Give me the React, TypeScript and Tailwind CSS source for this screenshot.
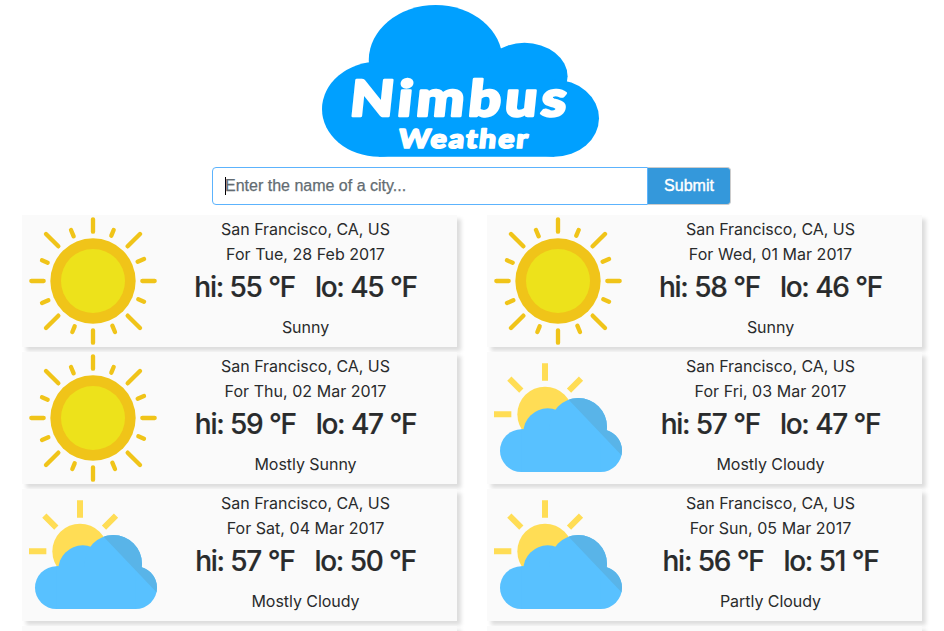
import React from "react";

type Condition = "Sunny" | "Mostly Sunny" | "Mostly Cloudy" | "Partly Cloudy";

interface Forecast {
  date: string;
  hi: number;
  lo: number;
  condition: Condition;
}

const forecasts: Forecast[] = [
  { date: "Tue, 28 Feb 2017", hi: 55, lo: 45, condition: "Sunny" },
  { date: "Wed, 01 Mar 2017", hi: 58, lo: 46, condition: "Sunny" },
  { date: "Thu, 02 Mar 2017", hi: 59, lo: 47, condition: "Mostly Sunny" },
  { date: "Fri, 03 Mar 2017", hi: 57, lo: 47, condition: "Mostly Cloudy" },
  { date: "Sat, 04 Mar 2017", hi: 57, lo: 50, condition: "Mostly Cloudy" },
  { date: "Sun, 05 Mar 2017", hi: 56, lo: 51, condition: "Partly Cloudy" },
];

function Logo() {
  return (
    <svg viewBox="30 15 829 454" preserveAspectRatio="none" className="mt-[5px] h-[152px] w-[277px] shrink-0 overflow-visible" aria-label="Nimbus Weather">
      <g fill="#00a0ff">
        <ellipse cx="370" cy="180" rx="200" ry="165" />
        <ellipse cx="636" cy="228" rx="129" ry="100" />
        <ellipse cx="200" cy="326" rx="170" ry="142" />
        <ellipse cx="725" cy="353" rx="134" ry="115" />
        <path d="M200 180H636V240H725V468H200Z" />
      </g>
      <g fill="#fff" stroke="#fff" strokeLinejoin="round" fontFamily="Lato, sans-serif" fontWeight="900">
        <text transform="translate(110 346) skewX(-6)" fontSize="148" strokeWidth="8" letterSpacing="11" textLength="660" lengthAdjust="spacingAndGlyphs">Nimbus</text>
        <text transform="translate(257 443) skewX(-6)" fontSize="78" strokeWidth="5" letterSpacing="5" textLength="392" lengthAdjust="spacingAndGlyphs">Weather</text>
      </g>
    </svg>
  );
}

const quarterTurns = [0, 90, 180, 270];

function SunIcon() {
  return (
    <svg viewBox="-192 -192 384 384" className="size-32">
      <circle r="128" fill="#f0c419" />
      <circle r="96" fill="#ede21b" />
      <g stroke="#f0c419" strokeWidth="13" strokeLinecap="round">
        {quarterTurns.map((angle) => (
          <g key={angle} transform={`rotate(${angle})`}>
            <path d="M0-185V-148M-141-141L-104-104M-66-153L-58-134M62-153L55-136" />
          </g>
        ))}
      </g>
    </svg>
  );
}

function CloudIcon({ id }: { id: string }) {
  const shape = (
    <>
      <circle cx="109" cy="317" r="64" />
      <circle cx="347" cy="317" r="64" />
      <circle cx="188" cy="263" r="73" />
      <circle cx="280" cy="245" r="86" />
      <path d="M109 253H347V381H109Z" />
    </>
  );
  return (
    <svg viewBox="27 27 384 384" className="size-32">
      <circle cx="180" cy="208" r="83" fill="#ffdd55" />
      <path d="M180 55V107M27 208H79M73 101L109 137M288 101L252 137" stroke="#ffdd55" strokeWidth="18" />
      <clipPath id={id}>{shape}</clipPath>
      <g fill="#58c1ff">{shape}</g>
      <path d="M246 159L411 332V150Z" fill="#59b4e8" clipPath={`url(#${id})`} />
    </svg>
  );
}

function ForecastCard({ day, id }: { day: Forecast; id: string }) {
  const sunny = day.condition === "Sunny" || day.condition === "Mostly Sunny";
  return (
    <article className="flex h-[132px] bg-[#fafafa] shadow-[4px_4px_4px_#dddddd]">
      <div className="w-[132px] shrink-0 pt-0.5 pl-[7px]">{sunny ? <SunIcon /> : <CloudIcon id={id} />}</div>
      <div className="flex flex-1 flex-col items-center pt-0.5 text-base leading-[25px] tracking-[-0.04px] whitespace-nowrap">
        <p>San Francisco, CA, US</p>
        <p className="tracking-[0.04px]">For {day.date}</p>
        <p className="flex h-[41px] items-center gap-[20px] text-[28px] font-[550] tracking-[-1.3px] [word-spacing:0.5px] [-webkit-text-stroke:0.2px_#292b2c]">
          <span>hi: {day.hi} °F</span>
          <span>lo: {day.lo} °F</span>
        </p>
        <p className="mt-[7px]">{day.condition}</p>
      </div>
    </article>
  );
}

export default function App() {
  return (
    <main className="flex h-[631px] flex-col overflow-hidden bg-white font-['Inter',sans-serif] text-[#292b2c]">
      <header className="flex flex-col items-center pr-[23px]">
        <Logo />
      </header>
      <form className="mt-[10px] ml-[212px] flex h-[38px] w-[519px] shrink-0 font-['Liberation_Sans',sans-serif] text-base">
        <div className="flex w-[436px] items-center rounded-l border border-[#5cb3fd] pl-3">
          <span className="h-[18px] w-px bg-black" />
          <span className="-ml-px text-[#636c72] [-webkit-text-stroke:0.25px_#636c72]">Enter the name of a city...</span>
        </div>
        <button type="button" className="flex-1 rounded-r border border-l-0 border-[#ccc] bg-[#3498db] text-white [-webkit-text-stroke:0.4px_white]">
          Submit
        </button>
      </form>
      <section className="mt-[10px] ml-[22px] grid w-[900px] shrink-0 grid-cols-[435px_435px] gap-x-[30px] gap-y-[5px]">
        {forecasts.map((day, i) => (
          <ForecastCard key={day.date} day={day} id={`cloud-${i}`} />
        ))}
        <div className="h-[132px] bg-[#fafafa] shadow-[4px_4px_4px_#dddddd]" />
        <div className="h-[132px] bg-[#fafafa] shadow-[4px_4px_4px_#dddddd]" />
      </section>
    </main>
  );
}
